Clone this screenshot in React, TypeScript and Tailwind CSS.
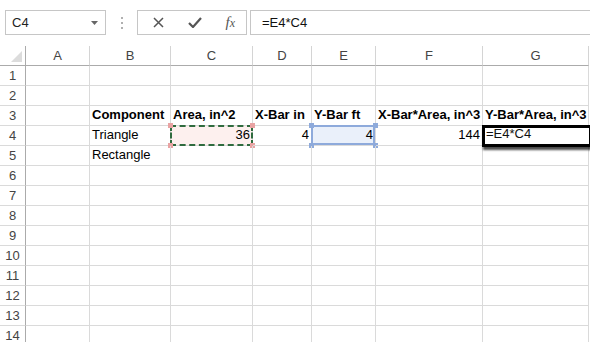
const cols = [
  { key: "A", w: "w-[64px]" },
  { key: "B", w: "w-[81px]" },
  { key: "C", w: "w-[82px]" },
  { key: "D", w: "w-[59px]" },
  { key: "E", w: "w-[64px]" },
  { key: "F", w: "w-[107px]" },
  { key: "G", w: "w-[106px]" },
];

type Cell = { text: string; bold?: boolean; right?: boolean };

const data: Record<number, Record<string, Cell>> = {
  3: {
    B: { text: "Component", bold: true },
    C: { text: "Area, in^2", bold: true },
    D: { text: "X-Bar in", bold: true },
    E: { text: "Y-Bar ft", bold: true },
    F: { text: "X-Bar*Area, in^3", bold: true },
    G: { text: "Y-Bar*Area, in^3", bold: true },
  },
  4: {
    B: { text: "Triangle" },
    C: { text: "36", right: true },
    D: { text: "4", right: true },
    E: { text: "4", right: true },
    F: { text: "144", right: true },
  },
  5: {
    B: { text: "Rectangle" },
  },
};

const Handle = ({ pos, color }: { pos: string; color: string }) => (
  <div className={`absolute w-[5px] h-[5px] ${pos} ${color}`} />
);

const Toolbar = () => (
  <div className="h-[46px] flex items-start pt-[10px] pl-[5px] bg-white">
    <div className="w-[101px] h-[25px] border border-[#c6c6c6] flex items-center justify-between pl-[6px] pr-[7px] text-[13px] text-[#222]">
      <span>C4</span>
      <svg width="7" height="4" viewBox="0 0 7 4">
        <path d="M0 0 H7 L3.5 4 Z" fill="#666" />
      </svg>
    </div>
    <div className="w-[31px] h-[25px] flex flex-col items-center justify-center gap-[3px]">
      <div className="w-[2px] h-[2px] bg-[#b0b0b0]" />
      <div className="w-[2px] h-[2px] bg-[#b0b0b0]" />
      <div className="w-[2px] h-[2px] bg-[#b0b0b0]" />
    </div>
    <div className="w-[110px] h-[25px] border border-[#c6c6c6] flex items-center justify-between pl-[15px] pr-[11px]">
      <svg width="11" height="11" viewBox="0 0 11 11">
        <path d="M1 1 L10 10 M10 1 L1 10" stroke="#555" strokeWidth="1.5" />
      </svg>
      <svg width="14" height="11" viewBox="0 0 14 11">
        <path d="M1 6 L5 10 L13 1" stroke="#555" strokeWidth="2.2" fill="none" />
      </svg>
      <span className="text-[15px] italic text-[#555] [font-family:'Liberation_Serif',serif]">
        f<span className="text-[12px]">x</span>
      </span>
    </div>
    <div className="ml-[3px] flex-1 h-[25px] border-y border-l border-[#c6c6c6] flex items-center pl-[11px] text-[13px] text-[#111]">
      =E4*C4
    </div>
  </div>
);

const HeaderRow = () => (
  <div className="flex h-[20px]">
    <div className="w-[26px] h-full border-r border-b border-[#ababab] relative shrink-0">
      <svg className="absolute right-[3px] bottom-[3px]" width="11" height="11" viewBox="0 0 11 11">
        <path d="M11 0 L11 11 L0 11 Z" fill="#dcdcdc" />
      </svg>
    </div>
    {cols.map((c) => (
      <div
        key={c.key}
        className={`${c.w} shrink-0 h-full border-r border-b border-[#ababab] border-r-[#d4d4d4] flex items-center justify-center text-[13px] text-[#444]`}
      >
        {c.key}
      </div>
    ))}
  </div>
);

const CellView = ({ row, col, w }: { row: number; col: string; w: string }) => {
  const cell = data[row]?.[col];
  let extra = "";
  let overlay: React.ReactNode = null;
  if (row === 4 && col === "C") {
    extra = "bg-[#fdf0ee]";
    overlay = (
      <>
        <div className="absolute -left-[1px] -top-[1px] -right-[1px] -bottom-[1px] border-2 border-dashed border-[#2f6b3e]" />
        <Handle pos="-left-[3px] -top-[3px]" color="bg-[#e9a3a3]" />
        <Handle pos="-right-[3px] -top-[3px]" color="bg-[#e9a3a3]" />
        <Handle pos="-left-[3px] -bottom-[3px]" color="bg-[#e9a3a3]" />
        <Handle pos="-right-[3px] -bottom-[3px]" color="bg-[#e9a3a3]" />
      </>
    );
  }
  if (row === 4 && col === "E") {
    extra = "bg-[#eaf0fa]";
    overlay = (
      <>
        <div className="absolute -left-[1px] -top-[1px] -right-[0px] -bottom-[0px] border-2 border-[#8eaadb]" />
        <Handle pos="-left-[3px] -top-[3px]" color="bg-[#8eaadb]" />
        <Handle pos="-right-[3px] -top-[3px]" color="bg-[#8eaadb]" />
        <Handle pos="-left-[3px] -bottom-[3px]" color="bg-[#8eaadb]" />
        <Handle pos="-right-[3px] -bottom-[3px]" color="bg-[#8eaadb]" />
      </>
    );
  }
  if (row === 4 && col === "G") {
    overlay = (
      <div className="absolute -left-[1px] -top-[1px] -right-[4px] -bottom-[2px] border-[3px] border-black bg-white flex items-end pl-[1px] pb-[1px] text-[13px] text-[#111] shadow-[1px_3px_2px_rgba(0,0,0,0.7)] z-10">
        =E4*C4
      </div>
    );
  }
  return (
    <div
      className={`${w} shrink-0 h-full border-r border-b border-[#dadada] relative ${extra}`}
    >
      {cell && (
        <div
          className={`absolute inset-0 flex items-end pb-[1px] px-[2px] whitespace-nowrap text-[13px] text-black ${
            cell.bold ? "font-bold" : ""
          } ${cell.right ? "justify-end" : ""}`}
        >
          {cell.text}
        </div>
      )}
      {overlay}
    </div>
  );
};

const Row = ({ n }: { n: number }) => (
  <div className="flex h-[20px]">
    <div className="w-[26px] shrink-0 h-full border-r border-b border-[#ababab] border-b-[#dadada] flex items-center justify-center text-[13px] text-[#444]">
      {n}
    </div>
    {cols.map((c) => (
      <CellView key={c.key} row={n} col={c.key} w={c.w} />
    ))}
  </div>
);

export default function App() {
  return (
    <div className="w-[590px] h-[342px] overflow-hidden bg-white [font-family:'Liberation_Sans',Arial,sans-serif]">
      <Toolbar />
      <HeaderRow />
      {Array.from({ length: 14 }).map((_, i) => (
        <Row key={i} n={i + 1} />
      ))}
    </div>
  );
}
